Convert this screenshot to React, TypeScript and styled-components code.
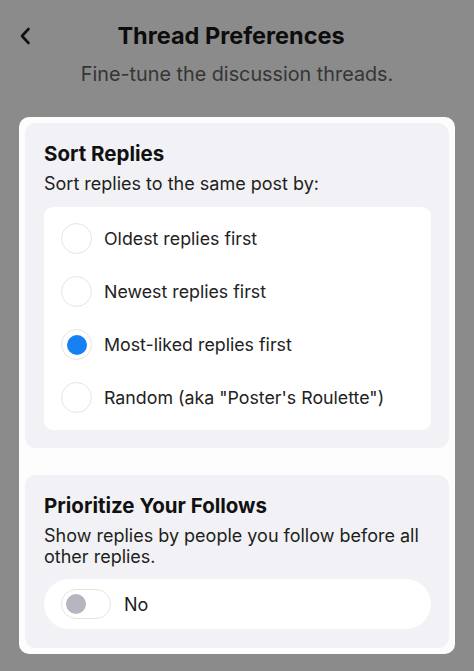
import React, { useState } from 'react';
import styled, { createGlobalStyle } from 'styled-components';

const GlobalStyle = createGlobalStyle`
  html, body {
    margin: 0;
    padding: 0;
    background: #8b8b8b;
  }
  body {
    font-family: Inter, "Noto Sans", "Liberation Sans", sans-serif;
    color: #1c1c1e;
    -webkit-font-smoothing: antialiased;
  }
`;

const Screen = styled.div`
  width: 474px;
  height: 671px;
  overflow: hidden;
  background: #8b8b8b;
  display: flex;
  flex-direction: column;
`;

const Header = styled.div`
  display: grid;
  grid-template-columns: 1fr auto 1fr;
  align-items: center;
  padding: 21px 30px 0 18px;
  height: 30px;
`;

const BackButton = styled.button`
  justify-self: start;
  border: 0;
  background: none;
  padding: 0 0 0 1px;
  width: 16px;
  height: 20px;
  display: flex;
  align-items: center;
  cursor: pointer;
`;

const Title = styled.h1`
  margin: 0;
  font-size: 23.5px;
  line-height: 30px;
  font-weight: 700;
  color: #0d0d0d;
`;

const Subtitle = styled.p`
  margin: 10px 0 0;
  text-align: center;
  font-size: 19.8px;
  line-height: 26px;
  color: #353535;
`;

const Panel = styled.div`
  margin: 30px 19px 0;
  background: #fdfdfd;
  border-radius: 10px;
  padding: 6px;
  display: flex;
  flex-direction: column;
  gap: 27px;
`;

const Section = styled.section<{ $bottom: number }>`
  background: #f2f2f6;
  border-radius: 11px;
  padding: 17px 18px ${(p) => p.$bottom}px 19px;
  display: flex;
  flex-direction: column;
`;

const SectionTitle = styled.h2`
  margin: 0;
  font-size: 20.5px;
  line-height: 28px;
  font-weight: 700;
  color: #111;
`;

const SectionText = styled.p`
  margin: 4.5px 0 0;
  font-size: 18px;
  line-height: 21px;
  color: #1e1e20;
`;

const OptionList = styled.div`
  margin-top: 13.5px;
  background: #fff;
  border-radius: 9px;
  padding: 5px 0 6px;
  display: flex;
  flex-direction: column;
`;

const OptionRow = styled.label`
  height: 53px;
  display: flex;
  align-items: center;
  gap: 12px;
  padding-left: 17px;
  font-size: 17.8px;
  color: #222;
  cursor: pointer;
`;

const Radio = styled.span<{ $checked: boolean }>`
  width: 31px;
  height: 31px;
  box-sizing: border-box;
  border-radius: 50%;
  border: 1.5px solid #e9e4e0;
  background: #fff;
  display: flex;
  align-items: center;
  justify-content: center;
  flex-shrink: 0;

  &::after {
    content: '';
    width: 20px;
    height: 20px;
    border-radius: 50%;
    background: #1681f2;
    display: ${(p) => (p.$checked ? 'block' : 'none')};
  }
`;

const ToggleRow = styled.div`
  margin-top: 12.5px;
  height: 50px;
  background: #fff;
  border-radius: 25px;
  display: flex;
  align-items: center;
  gap: 13px;
  padding-left: 17px;
  font-size: 18px;
  color: #1c1c1e;
`;

const Toggle = styled.button<{ $on: boolean }>`
  width: 50px;
  height: 30px;
  box-sizing: border-box;
  border-radius: 15px;
  border: 1.5px solid #e6e3de;
  background: ${(p) => (p.$on ? '#1681f2' : '#fff')};
  padding: 0 4px;
  display: flex;
  align-items: center;
  justify-content: ${(p) => (p.$on ? 'flex-end' : 'flex-start')};
  cursor: pointer;

  &::after {
    content: '';
    width: 20px;
    height: 20px;
    border-radius: 50%;
    background: ${(p) => (p.$on ? '#fff' : '#b6b6c0')};
  }
`;

const options = [
  'Oldest replies first',
  'Newest replies first',
  'Most-liked replies first',
  'Random (aka "Poster\'s Roulette")',
];

export default function App() {
  const [sort, setSort] = useState(2);
  const [prioritize, setPrioritize] = useState(false);

  return (
    <Screen>
      <GlobalStyle />
      <Header>
        <BackButton aria-label="Back">
          <svg width="12" height="18" viewBox="0 0 12 18" fill="none">
            <path d="M9.5 2 L3 9 L9.5 16" stroke="#111" strokeWidth="2.6" strokeLinecap="round" strokeLinejoin="round" />
          </svg>
        </BackButton>
        <Title>Thread Preferences</Title>
        <span />
      </Header>
      <Subtitle>Fine-tune the discussion threads.</Subtitle>

      <Panel>
        <Section $bottom={18}>
          <SectionTitle>Sort Replies</SectionTitle>
          <SectionText>Sort replies to the same post by:</SectionText>
          <OptionList>
            {options.map((label, i) => (
              <OptionRow key={label} onClick={() => setSort(i)}>
                <Radio $checked={sort === i} />
                {label}
              </OptionRow>
            ))}
          </OptionList>
        </Section>

        <Section $bottom={19}>
          <SectionTitle>Prioritize Your Follows</SectionTitle>
          <SectionText>Show replies by people you follow before all other replies.</SectionText>
          <ToggleRow>
            <Toggle $on={prioritize} onClick={() => setPrioritize(!prioritize)} aria-label="Prioritize your follows" />
            {prioritize ? 'Yes' : 'No'}
          </ToggleRow>
        </Section>
      </Panel>
    </Screen>
  );
}
